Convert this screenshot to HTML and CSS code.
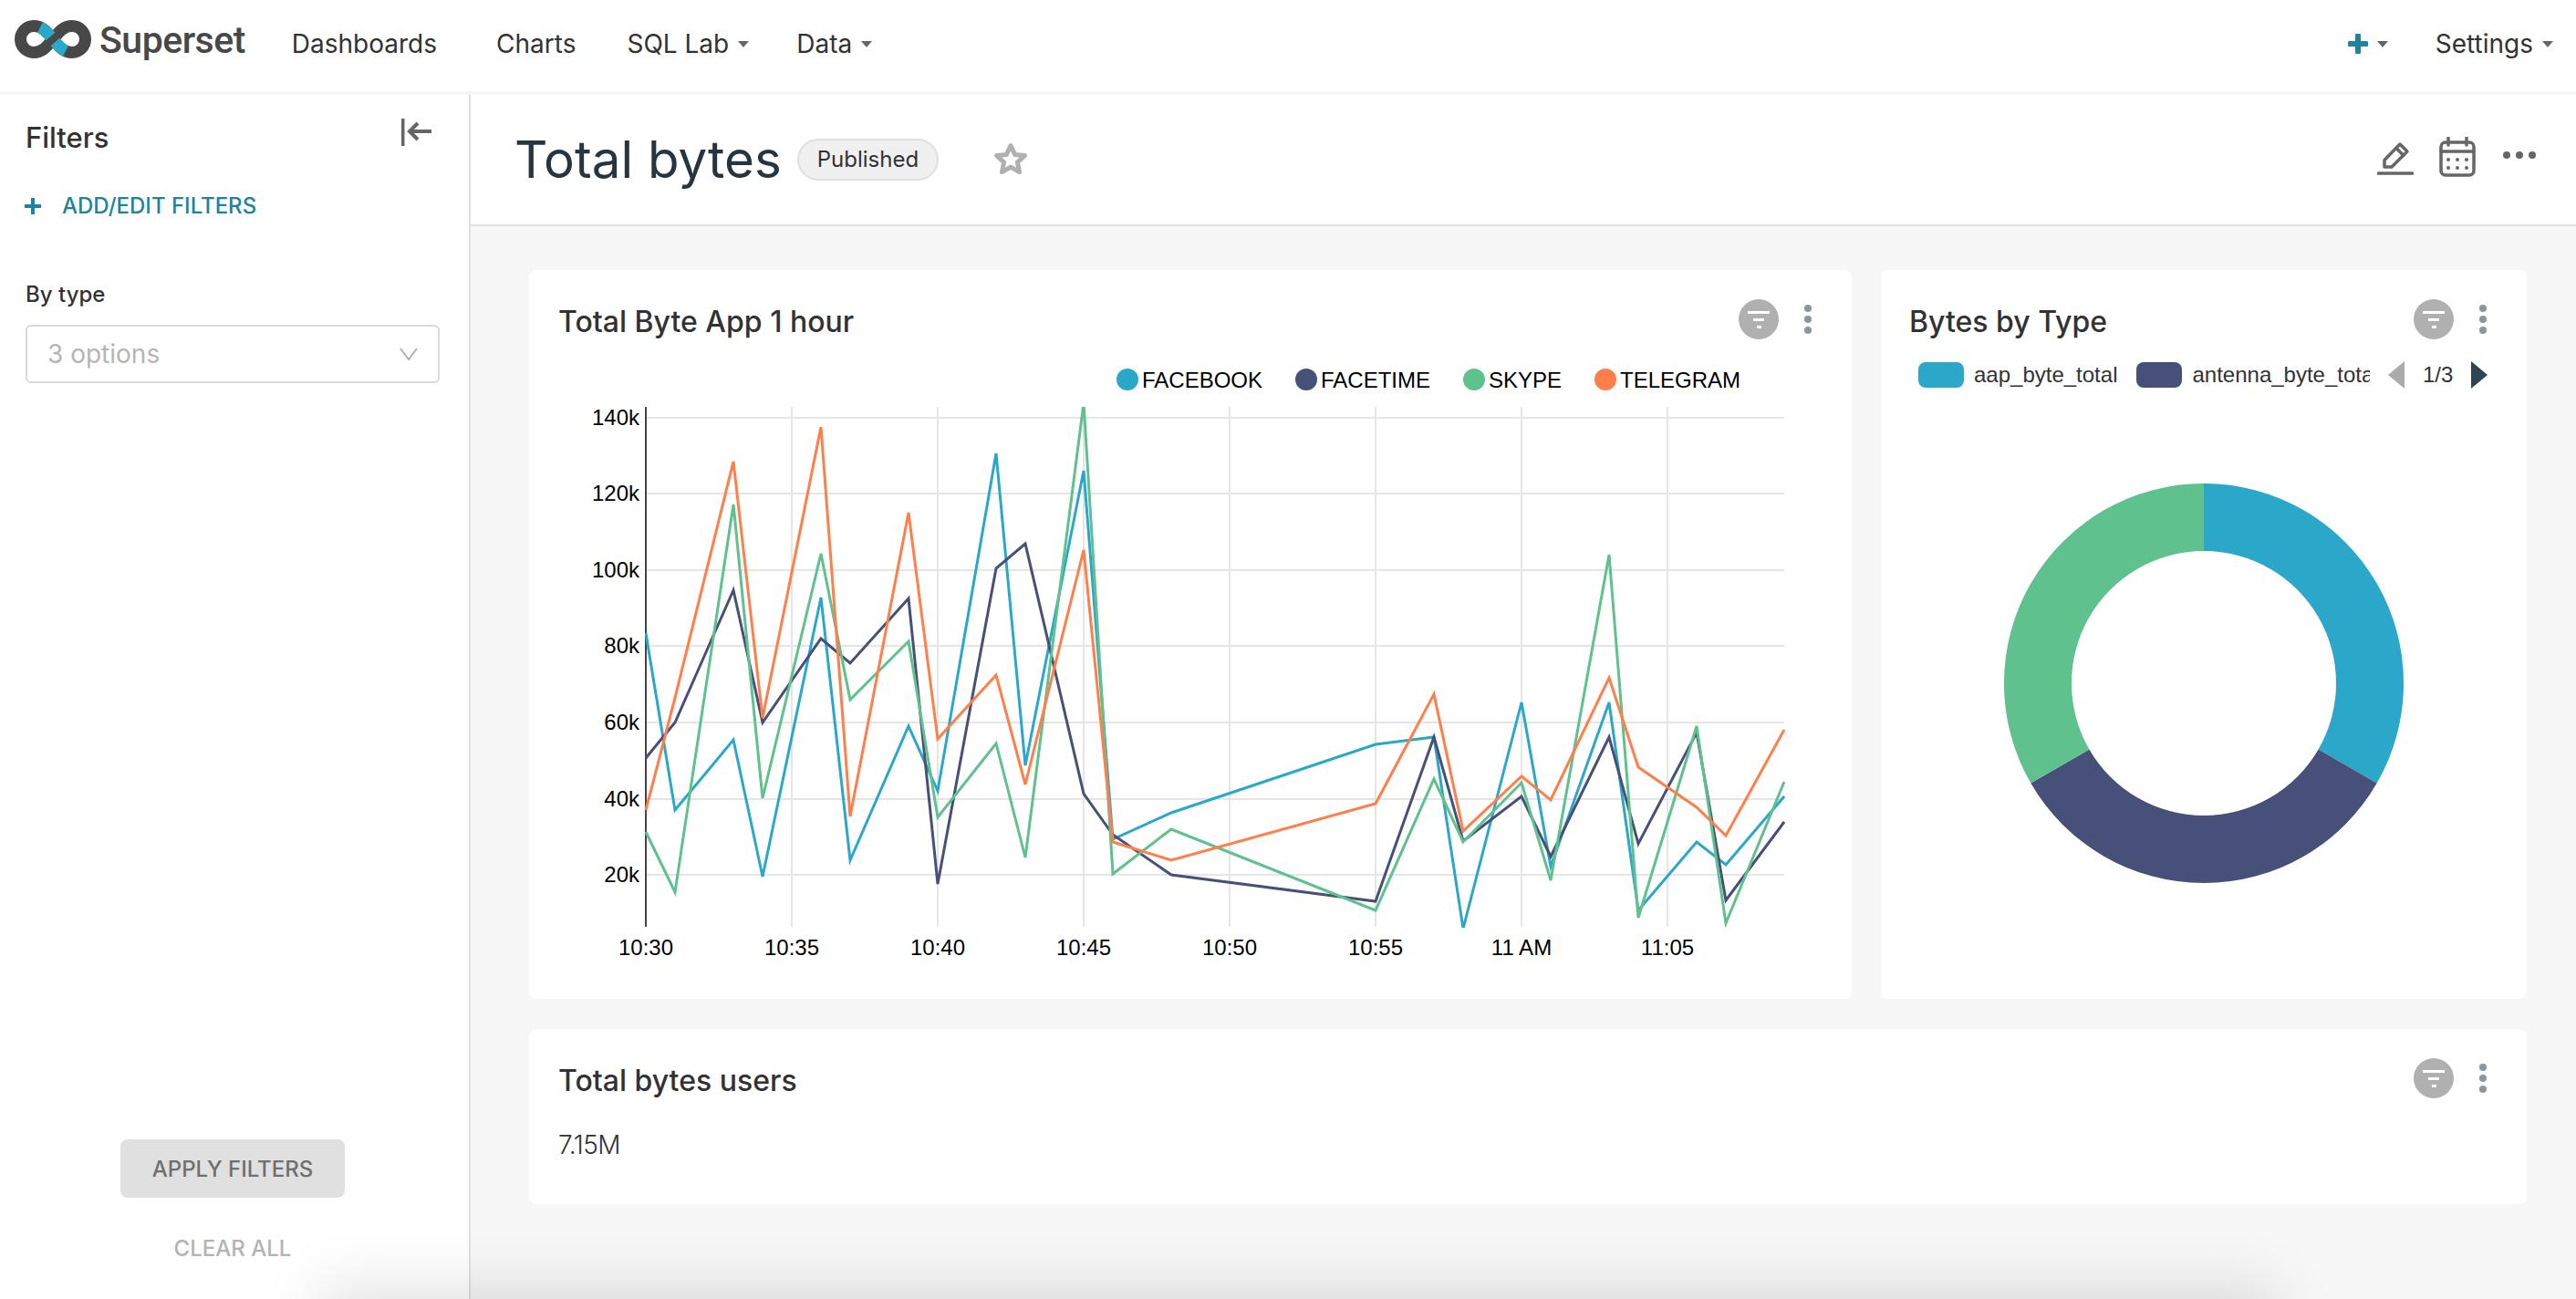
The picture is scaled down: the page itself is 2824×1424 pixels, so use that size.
FILE: index.html
```html
<!DOCTYPE html>
<html lang="en">
<head>
  <meta charset="UTF-8" />
  <meta name="viewport" content="width=device-width, initial-scale=1" />
  <title>Total bytes - Superset</title>
  <link rel="stylesheet" href="styles.css">
</head>
<body>

  <nav class="navbar">
    <a class="brand">
      <svg class="brand-mark" viewBox="16 22 84 42">
        <path class="mark-dark" d="M37 28.5C47 28.5 52 36 58 43C64 50 69 57.5 79 57.5A14.5 14.5 0 0 0 79 28.5C69 28.5 64 36 58 43C52 50 47 57.5 37 57.5A14.5 14.5 0 0 1 37 28.5Z"/>
        <path class="mark-blue" d="M44 30C48 32 52 36 55.5 40M60.5 46C64 50 68 54 72 56"/>
      </svg>
      <span class="brand-name">Superset</span>
    </a>
    <ul class="menu">
      <li class="menu-dashboards">Dashboards</li>
      <li>Charts</li>
      <li>SQL Lab<i class="caret"></i></li>
      <li class="menu-data">Data<i class="caret"></i></li>
    </ul>
    <ul class="menu menu-right">
      <li class="menu-new">
        <svg class="plus-icon" viewBox="0 0 22 22"><path d="M11 2V20M2 11H20"/></svg>
        <i class="caret"></i>
      </li>
      <li>Settings<i class="caret"></i></li>
    </ul>
  </nav>

  <div class="layout">
    <aside class="filter-bar">
      <div class="filter-head">
        <h2>Filters</h2>
        <svg class="collapse-icon" viewBox="0 0 34 32">
          <path d="M1.5 1V31"/>
          <path d="M33 15H10M18 6L9 15L18 24"/>
        </svg>
      </div>
      <a class="add-filters">
        <svg class="add-icon" viewBox="0 0 20 20"><path d="M10 1V19M1 10H19"/></svg>
        ADD/EDIT FILTERS
      </a>
      <label class="filter-label">By type</label>
      <div class="select-box">
        <span>3 options</span>
        <svg class="chevron" viewBox="0 0 20 14"><path d="M1 1L10 13L19 1"/></svg>
      </div>
      <div class="filter-actions">
        <button class="apply-btn">APPLY FILTERS</button>
        <button class="clear-btn">CLEAR ALL</button>
      </div>
    </aside>

    <main class="content">
      <header class="dash-header">
        <h1>Total bytes</h1>
        <span class="status-pill">Published</span>
        <svg class="star-icon" viewBox="0 0 38 36"><path d="M19 3.5L23.6 13.4L34.4 14.6L26.4 21.9L28.6 32.5L19 27.1L9.4 32.5L11.6 21.9L3.6 14.6L14.4 13.4Z"/></svg>
        <div class="header-actions">
          <svg class="edit-icon" viewBox="0 0 40 40">
            <path d="M8 23.5L25 6L33 14L16 31H8Z"/>
            <path d="M21 10.5L29 18.5"/>
            <path d="M1 38H39"/>
          </svg>
          <svg class="calendar-icon" viewBox="0 0 40 44">
            <rect x="2" y="6" width="36" height="36" rx="5"/>
            <path d="M2 16H38M10 1V9M30 1V9"/>
            <g class="calendar-dots">
              <circle cx="10" cy="25" r="2"/><circle cx="20" cy="25" r="2"/><circle cx="30" cy="25" r="2"/>
              <circle cx="10" cy="34" r="2"/><circle cx="20" cy="34" r="2"/><circle cx="30" cy="34" r="2"/>
            </g>
          </svg>
          <div class="more-dots"><i></i><i></i><i></i></div>
        </div>
      </header>

      <div class="dash-grid">
        <section class="card card-line">
          <div class="card-head">
            <h3>Total Byte App 1 hour</h3>
            <div class="card-tools">
              <span class="filter-badge"><i></i><i></i><i></i></span>
              <span class="kebab"><i></i><i></i><i></i></span>
            </div>
          </div>
          <svg class="line-chart" viewBox="580 396 1450 664">
            <defs>
              <clipPath id="plot-clip"><rect x="707" y="446" width="1250" height="571"/></clipPath>
            </defs>

            <g class="chart-legend">
              <circle class="fill-blue" cx="1236" cy="416" r="12"/><text x="1252" y="425">FACEBOOK</text>
              <circle class="fill-navy" cx="1432" cy="416" r="12"/><text x="1448" y="425">FACETIME</text>
              <circle class="fill-green" cx="1616" cy="416" r="12"/><text x="1632" y="425">SKYPE</text>
              <circle class="fill-orange" cx="1760" cy="416" r="12"/><text x="1776" y="425">TELEGRAM</text>
            </g>

            <g class="grid-lines">
              <path d="M708 458H1956M708 541H1956M708 625H1956M708 708H1956M708 792H1956M708 876H1956M708 959H1956"/>
              <path d="M868 446V1016M1028 446V1016M1188 446V1016M1348 446V1016M1508 446V1016M1668 446V1016M1828 446V1016"/>
            </g>
            <path class="y-axis" d="M708 446V1016"/>

            <g class="y-labels">
              <text x="701" y="466">140k</text>
              <text x="701" y="549">120k</text>
              <text x="701" y="633">100k</text>
              <text x="701" y="716">80k</text>
              <text x="701" y="800">60k</text>
              <text x="701" y="884">40k</text>
              <text x="701" y="967">20k</text>
            </g>
            <g class="x-labels">
              <text x="708" y="1047">10:30</text>
              <text x="868" y="1047">10:35</text>
              <text x="1028" y="1047">10:40</text>
              <text x="1188" y="1047">10:45</text>
              <text x="1348" y="1047">10:50</text>
              <text x="1508" y="1047">10:55</text>
              <text x="1668" y="1047">11 AM</text>
              <text x="1828" y="1047">11:05</text>
            </g>

            <g class="series" clip-path="url(#plot-clip)">
              <polyline class="stroke-blue" points="708,694 740,888 804,811 836,961 900,655 932,943 996,796 1028,867 1092,497 1124,839 1188,516 1220,920 1284,891 1508,816 1572,808 1604,1018 1668,770 1700,950 1764,770 1796,998 1860,923 1892,948 1956,873"/>
              <polyline class="stroke-navy" points="708,831 740,792 804,647 836,792 900,700 932,727 996,656 1028,969 1092,623 1124,596 1188,870 1220,915 1284,959 1508,988 1572,808 1604,922 1668,873 1700,939 1764,808 1796,925 1860,803 1892,987 1956,901"/>
              <polyline class="stroke-green" points="708,912 740,978 804,553 836,875 900,607 932,767 996,703 1028,896 1092,815 1124,940 1188,442 1220,958 1284,909 1508,998 1572,854 1604,923 1668,858 1700,965 1764,608 1796,1006 1860,796 1892,1012 1956,857"/>
              <polyline class="stroke-orange" points="708,888 740,765 804,506 836,787 900,468 932,895 996,562 1028,810 1092,740 1124,860 1188,603 1220,923 1284,943 1508,881 1572,761 1604,911 1668,851 1700,877 1764,743 1796,841 1860,885 1892,916 1956,800"/>
            </g>
          </svg>
        </section>

        <section class="card card-donut">
          <div class="card-head">
            <h3>Bytes by Type</h3>
            <div class="card-tools">
              <span class="filter-badge"><i></i><i></i><i></i></span>
              <span class="kebab"><i></i><i></i><i></i></span>
            </div>
          </div>
          <div class="donut-legend">
            <div class="legend-items">
              <span class="legend-item"><i class="swatch fill-bg-blue"></i>aap_byte_total</span>
              <span class="legend-item"><i class="swatch fill-bg-navy"></i>antenna_byte_total</span>
            </div>
            <div class="legend-pager">
              <i class="arrow-left"></i>
              <span>1/3</span>
              <i class="arrow-right"></i>
            </div>
          </div>
          <svg class="donut" viewBox="-220 -220 440 440">
            <path class="fill-blue" d="M0 -219A219 219 0 0 1 189.7 109.5L125.6 72.5A145 145 0 0 0 0 -145Z"/>
            <path class="fill-navy" d="M189.7 109.5A219 219 0 0 1 -189.7 109.5L-125.6 72.5A145 145 0 0 0 125.6 72.5Z"/>
            <path class="fill-green" d="M-189.7 109.5A219 219 0 0 1 0 -219L0 -145A145 145 0 0 0 -125.6 72.5Z"/>
          </svg>
        </section>

        <section class="card card-number">
          <div class="card-head">
            <h3>Total bytes users</h3>
            <div class="card-tools">
              <span class="filter-badge"><i></i><i></i><i></i></span>
              <span class="kebab"><i></i><i></i><i></i></span>
            </div>
          </div>
          <p class="big-number">7.15M</p>
        </section>
      </div>
    </main>
  </div>

  <div class="bottom-shadow"></div>

</body>
</html>
```

FILE: styles.css
```css
* {
  box-sizing: border-box;
}

body {
  margin: 0;
  height: 1424px;
  overflow: hidden;
  font-family: 'Inter', sans-serif;
  color: #323232;
  background: #f7f7f7;
}

h1, h2, h3, p, ul {
  margin: 0;
  padding: 0;
}

/* top nav */
.navbar {
  display: flex;
  align-items: center;
  height: 104px;
  padding: 0 25px 4px 16px;
  background: #fff;
  border-bottom: 4px solid #f6f6f6;
}

.brand {
  display: flex;
  align-items: center;
  gap: 9px;
}

.brand-mark {
  width: 84px;
  height: 42px;
  margin-top: -10px;
  overflow: visible;
}

.mark-dark {
  fill: none;
  stroke: #484848;
  stroke-width: 13;
}

.mark-blue {
  fill: none;
  stroke: #2aa9c9;
  stroke-width: 13;
}

.brand-name {
  font-family: 'Roboto', sans-serif;
  font-weight: 500;
  font-size: 41px;
  letter-spacing: -0.5px;
  color: #484848;
  margin-top: -9px;
}

.menu {
  display: flex;
  align-items: center;
  gap: 56px;
  margin-left: 51px;
  list-style: none;
  font-size: 28px;
  color: #323232;
}

.menu li {
  display: flex;
  align-items: center;
}

.menu-dashboards {
  margin-right: 9px;
}

.menu .menu-data {
  margin-left: -4px;
}

.menu-right {
  margin-left: auto;
  gap: 52px;
}

.caret {
  display: inline-block;
  width: 0;
  height: 0;
  margin-left: 10px;
  border-left: 6px solid transparent;
  border-right: 6px solid transparent;
  border-top: 7px solid #666;
}

.plus-icon {
  width: 22px;
  height: 22px;
  fill: none;
  stroke: #20839d;
  stroke-width: 6;
  stroke-linecap: round;
}

/* page body */
.layout {
  display: flex;
  height: 1320px;
}

.filter-bar {
  display: flex;
  flex-direction: column;
  flex: none;
  width: 516px;
  height: 100%;
  padding: 0 32px 0 28px;
  background: #fff;
  border-right: 2px solid #e0e0e0;
}

.filter-head {
  display: flex;
  align-items: center;
  justify-content: space-between;
  height: 50px;
  margin-top: 21px;
  padding-right: 8px;
}

.filter-head h2 {
  font-size: 31px;
  font-weight: 500;
}

.collapse-icon {
  width: 34px;
  height: 32px;
  margin-top: -11px;
  fill: none;
  stroke: #666;
  stroke-width: 4;
}

.add-filters {
  display: flex;
  align-items: center;
  gap: 22px;
  margin: 36px 0 0 -2px;
  font-size: 24px;
  font-weight: 500;
  color: #20839d;
}

.add-icon {
  width: 20px;
  height: 20px;
  fill: none;
  stroke: #20839d;
  stroke-width: 4;
}

.filter-label {
  display: block;
  margin-top: 68px;
  font-size: 24px;
  font-weight: 500;
}

.select-box {
  display: flex;
  align-items: center;
  justify-content: space-between;
  height: 64px;
  margin-top: 19px;
  padding: 0 22px 0 22px;
  border: 2px solid #d9d9d9;
  border-radius: 6px;
  font-size: 28px;
  color: #b5b5b5;
}

.chevron {
  width: 20px;
  height: 14px;
  fill: none;
  stroke: #b0b0b0;
  stroke-width: 2;
}

.filter-actions {
  display: flex;
  flex-direction: column;
  align-items: center;
  margin-top: auto;
  padding-bottom: 41px;
}

.apply-btn, .clear-btn {
  border: none;
  font-family: 'Inter', sans-serif;
  font-size: 24px;
  font-weight: 500;
}

.apply-btn {
  width: 246px;
  height: 64px;
  background: #e0e0e0;
  border-radius: 8px;
  color: #6f6f6f;
}

.clear-btn {
  margin-top: 40px;
  padding: 0;
  height: 30px;
  background: none;
  color: #b3b3b3;
}

.content {
  flex: 1;
  min-width: 0;
}

.dash-header {
  display: flex;
  align-items: center;
  height: 144px;
  padding: 0 44px 0 48px;
  background: #fff;
  border-bottom: 2px solid #e0e0e0;
}

.dash-header h1 {
  font-size: 56.5px;
  font-weight: 400;
  color: #263540;
  margin-top: -2px;
}

.status-pill {
  margin-left: 17px;
  padding: 0 20px;
  height: 46px;
  line-height: 42px;
  background: #f0f0f0;
  border: 2px solid #e0e0e0;
  border-radius: 23px;
  font-size: 24px;
}

.star-icon {
  width: 38px;
  height: 36px;
  margin: -2px 0 0 60px;
  fill: none;
  stroke: #b0b0b0;
  stroke-width: 5;
  stroke-linejoin: round;
}

.header-actions {
  display: flex;
  align-items: center;
  margin-left: auto;
  margin-top: -6px;
}

.edit-icon, .calendar-icon {
  fill: none;
  stroke: #666;
  stroke-width: 3.5;
  stroke-linecap: round;
  stroke-linejoin: round;
}

.edit-icon {
  width: 40px;
  height: 40px;
}

.calendar-icon {
  width: 40px;
  height: 44px;
  margin-left: 28px;
}

.calendar-dots {
  fill: #666;
  stroke: none;
}

.more-dots {
  display: flex;
  gap: 6px;
  margin: -4px 0 0 30px;
}

.more-dots i {
  width: 8px;
  height: 8px;
  border-radius: 50%;
  background: #666;
}

/* dashboard cards */
.dash-grid {
  display: grid;
  grid-template-columns: 1450px 708px;
  grid-template-rows: 799px 192px;
  gap: 33px 32px;
  padding: 48px 0 0 64px;
}

.card {
  position: relative;
  background: #fff;
  border-radius: 8px;
  overflow: hidden;
}

.card-number {
  grid-column: 1 / 3;
}

.card-head {
  display: flex;
  align-items: flex-start;
  justify-content: space-between;
  padding: 32px 44px 0 32px;
}

.card-head h3 {
  margin-top: 1px;
  font-size: 32px;
  font-weight: 500;
  line-height: 48px;
}

.card-donut .card-head {
  padding-left: 31px;
}

.card-tools {
  display: flex;
  align-items: center;
  gap: 28px;
}

.filter-badge {
  display: flex;
  flex-direction: column;
  align-items: center;
  justify-content: center;
  gap: 5px;
  width: 44px;
  height: 44px;
  border-radius: 50%;
  background: #b0b0b0;
}

.filter-badge i {
  height: 3px;
  background: #fff;
}

.filter-badge i:nth-child(1) { width: 24px; }
.filter-badge i:nth-child(2) { width: 12px; }
.filter-badge i:nth-child(3) { width: 5px; }

.kebab {
  display: flex;
  flex-direction: column;
  gap: 4px;
}

.kebab i {
  width: 8px;
  height: 8px;
  border-radius: 50%;
  background: #8a979f;
}

.line-chart {
  position: absolute;
  left: 0;
  top: 100px;
  width: 1450px;
  height: 664px;
}

.chart-legend text, .y-labels text, .x-labels text {
  font-family: 'Liberation Sans', sans-serif;
  font-size: 24px;
  fill: #000;
}

.y-labels text {
  text-anchor: end;
}

.x-labels text {
  text-anchor: middle;
}

.grid-lines path {
  fill: none;
  stroke: #e5e5e5;
  stroke-width: 2;
}

.y-axis {
  stroke: #444;
  stroke-width: 2;
}

.series polyline {
  fill: none;
  stroke-width: 3;
  stroke-linejoin: miter;
  stroke-miterlimit: 4;
}

.stroke-blue { stroke: #2ba8c9; }
.stroke-navy { stroke: #465079; }
.stroke-green { stroke: #5fc18d; }
.stroke-orange { stroke: #ff7f4b; }

.fill-blue { fill: #2ba8c9; }
.fill-navy { fill: #465079; }
.fill-green { fill: #5fc18d; }
.fill-orange { fill: #ff7f4b; }

.fill-bg-blue { background: #2ba8c9; }
.fill-bg-navy { background: #465079; }

.donut-legend {
  display: flex;
  align-items: center;
  margin: 19px 0 0 41px;
  font-family: 'Liberation Sans', sans-serif;
  font-size: 24px;
  color: #333;
}

.legend-items {
  display: flex;
  gap: 21px;
  width: 495px;
  overflow: hidden;
  white-space: nowrap;
}

.legend-item {
  display: flex;
  align-items: center;
  gap: 11px;
}

.swatch {
  flex: none;
  width: 50px;
  height: 28px;
  border-radius: 8px;
}

.legend-pager {
  display: flex;
  align-items: center;
  gap: 20px;
  margin-left: 20px;
}

.arrow-left, .arrow-right {
  width: 0;
  height: 0;
  border-top: 15px solid transparent;
  border-bottom: 15px solid transparent;
}

.arrow-left {
  border-right: 18px solid #aaa;
}

.arrow-right {
  border-left: 18px solid #2f4554;
}

.donut {
  position: absolute;
  left: 134px;
  top: 233px;
  width: 440px;
  height: 440px;
}

.big-number {
  margin: 29px 0 0 32px;
  font-size: 28px;
  font-weight: 300;
  letter-spacing: -0.5px;
}

/* the soft shade along the bottom edge */
.bottom-shadow {
  position: fixed;
  left: 360px;
  right: 340px;
  bottom: -60px;
  height: 60px;
  box-shadow: 0 0 70px 10px rgba(0, 0, 0, 0.13);
}
```
